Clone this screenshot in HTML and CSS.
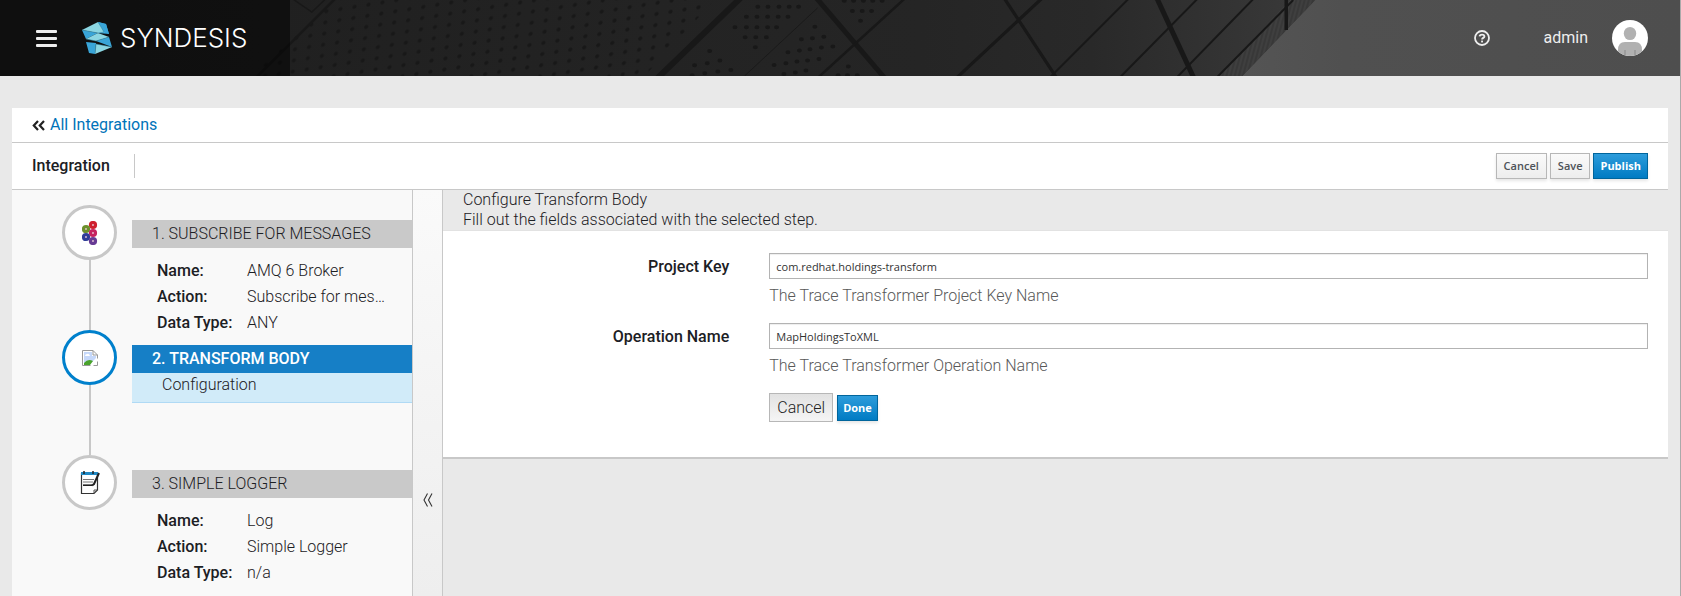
FILE: index.html
```html
<!DOCTYPE html>
<html lang="en">
<head>
<meta charset="utf-8">
<title>Syndesis</title>
<link rel="stylesheet" href="styles.css">
</head>
<body>
<div class="page">
  <header class="masthead">
    <svg class="masthead-art" viewBox="0 0 1681 76" preserveAspectRatio="none" aria-hidden="true">
      <defs>
        <linearGradient id="wall" x1="0" x2="1" y1="0" y2="0">
          <stop offset="0" stop-color="#1e1e1e"/><stop offset=".7" stop-color="#252525"/><stop offset=".83" stop-color="#292929"/><stop offset="1" stop-color="#3a3a3a"/>
        </linearGradient>
        <linearGradient id="sky" x1="0" x2="1" y1="0" y2="0">
          <stop offset="0" stop-color="#565656"/><stop offset=".3" stop-color="#505050"/><stop offset="1" stop-color="#4e4e4e"/>
        </linearGradient>
        <pattern id="dots" width="14" height="11" patternUnits="userSpaceOnUse" patternTransform="translate(6 2) skewY(-9) skewX(-6)">
          <circle cx="5" cy="5" r="2.1" fill="#181818"/>
        </pattern>
        <pattern id="hatch" width="4" height="8" patternUnits="userSpaceOnUse" patternTransform="rotate(15)">
          <path d="M1 0V8" stroke="#343434" stroke-width="1.4"/>
        </pattern>
      </defs>
      <rect x="1200" width="481" height="76" fill="url(#sky)"/>
      <path d="M0 0H1316L1243 76H0Z" fill="url(#wall)"/>
      <path d="M1291 0H1316L1243 76H1219Z" fill="#3f3f3f"/>
      <path d="M1291 0H1316L1243 76H1219Z" fill="url(#hatch)"/>
      <path d="M335 0H715L645 76H250Z" fill="url(#dots)"/>
      <g fill="none" stroke="#181818">
        <path d="M742 -3L657 79" stroke-width="6"/>
        <path d="M816 -3L886 79" stroke-width="5"/>
        <path d="M907 -3L817 79M337 -3L255 79" stroke-width="2.5"/>
        <path d="M290 -3L312 12L328 -3" stroke-width="1.5"/>
        <path d="M818 8L745 76" stroke-width=".8"/>
        <path d="M1044 -3L956 79M1004 -3L1058 79" stroke-width="3.2"/>
        <path d="M1131 -3L1049 79M1200 -3L1119 79M1256 -3L1176 79M1294 0L1216 79" stroke-width="2"/>
        <path d="M1157 -3L1195 79" stroke-width="5"/>
        <path d="M1287 0V30" stroke-width="3.5"/>
      </g>
      <path transform="translate(400) scale(.408 .333)" fill="none" stroke="#181818" stroke-width="12" stroke-linecap="round" d="M878 20h.1M903 20h.1M930 20h.1M955 20h.1M978 20h.1M850 50h.1M876 50h.1M902 50h.1M928 50h.1M952 50h.1M822 82h.1M850 82h.1M876 82h.1M902 82h.1M924 82h.1M847 112h.1M873 112h.1M899 112h.1M872 142h.1M1018 80h.1M985 118h.1M1012 115h.1M1040 110h.1M952 157h.1M980 152h.1M1006 148h.1M1034 143h.1M1062 140h.1M918 195h.1M947 190h.1M974 185h.1M1000 182h.1M1028 177h.1M942 222h.1M970 218h.1M996 212h.1M760 153h.1M723 196h.1M754 190h.1M785 182h.1M717 226h.1M748 220h.1M780 215h.1M812 210h.1M1110 33h.1M1134 33h.1M1157 33h.1M1130 62h.1M1090 2h.1M1113 2h.1M1137 2h.1M1160 2h.1M1183 2h.1M1100 200h.1M1075 226h.1M1098 226h.1M1122 226h.1"/>
    </svg>
    <div class="brand">
      <button class="menu" type="button" aria-label="Toggle navigation"><span></span><span></span><span></span></button>
      <svg class="logo" viewBox="0 0 30 32" aria-hidden="true">
        <path fill="#39a5d8" d="M16 0L24 2L27 12L16 11ZM0 8L16 11L4 17ZM27 15L30 25L14 19ZM4 20L14 21L13 32L7 31Z"/>
        <path fill="#8bd6e2" d="M0 8L16 0L24 10L16 11ZM4 17L16 11L27 15L14 19ZM14 22L30 25L13 32Z"/>
        <path fill="#39a5d8" d="M16 0L24 2L27 12L22 10Z"/>
        <path fill="none" stroke="#2b7f9c" stroke-width=".5" d="M0 8L16 11L22 10L16 0M4 17L14 19L27 15M14 22L30 25M14 22L13 32"/>
      </svg>
      <span class="wordmark">SYNDESIS</span>
    </div>
    <div class="account">
      <button class="help" type="button" aria-label="Help">
        <svg viewBox="0 0 16 16" aria-hidden="true"><circle cx="8" cy="8" r="7" fill="none" stroke="#eee" stroke-width="1.800"/><path d="M5.600 6.300C5.800 4.200 10.400 3.900 10.400 6.400C10.400 7.900 8.100 7.900 8.100 9.400" fill="none" stroke="#eee" stroke-width="1.900"/><rect x="7.100" y="10.600" width="1.900" height="1.800" fill="#eee"/></svg>
      </button>
      <span class="user">admin</span>
      <svg class="avatar" viewBox="0 0 36 36" aria-hidden="true"><defs><clipPath id="face"><circle cx="18" cy="18" r="18"/></clipPath></defs><circle cx="18" cy="18" r="18" fill="#fff"/><g clip-path="url(#face)"><ellipse cx="18" cy="13.500" rx="6.200" ry="6.600" fill="#b1b1b1"/><path d="M6 36V30Q6 22 13 22H23Q30 22 30 30V36Z" fill="#b1b1b1"/><path d="M13 30V36M23 30V36" stroke="#979797" stroke-width="1.500"/></g></svg>
    </div>
  </header>

  <main class="sheet">
    <nav class="crumbs" aria-label="Breadcrumb">
      <svg class="chevrons" viewBox="0 0 13 11" aria-hidden="true"><path d="M6 1L1.800 5.500L6 10M12 1L7.800 5.500L12 10" fill="none" stroke="#222" stroke-width="2.200"/></svg>
      <a href="#">All Integrations</a>
    </nav>
    <div class="toolbar">
      <h1>Integration</h1>
      <div class="actions">
        <button class="btn" type="button">Cancel</button>
        <button class="btn" type="button">Save</button>
        <button class="btn primary" type="button">Publish</button>
      </div>
    </div>

    <div class="workspace">
      <ol class="steps">
        <li class="step">
          <div class="rail"><span class="node">
            <svg width="16" height="24" viewBox="0 0 16 24" aria-hidden="true"><g fill="#e9c9d8" stroke-width="3.200"><circle cx="11" cy="4" r="2.500" stroke="#cf1f2e"/><circle cx="4" cy="8" r="2.500" stroke="#6d902c"/><circle cx="11" cy="12" r="2.500" stroke="#c6225f"/><circle cx="4" cy="16" r="2.500" stroke="#303d98"/><circle cx="11" cy="20" r="2.500" stroke="#673a94"/></g></svg>
          </span></div>
          <div class="detail">
            <h2>1. SUBSCRIBE FOR MESSAGES</h2>
            <dl><dt>Name:</dt><dd>AMQ 6 Broker</dd><dt>Action:</dt><dd>Subscribe for mes…</dd><dt>Data Type:</dt><dd>ANY</dd></dl>
          </div>
        </li>
        <li class="step current">
          <div class="rail"><span class="node">
            <svg width="16" height="16" viewBox="0 0 16 16" aria-hidden="true"><path d="M.500 .500H11L15.500 5V15.500H.500Z" fill="#fff" stroke="#999"/><path d="M2 2H10V6H14V8L8 14H2Z" fill="#c5d8fa"/><path d="M3 6Q3 4 5 4Q7 3 8 6Z" fill="#fff"/><path d="M2 15V13Q6 8 11 11L8 15Z" fill="#4aa32c"/><path d="M11 .500V5H15.500" fill="none" stroke="#999"/><path d="M8 16L16 8V11L11 16Z" fill="#fff"/></svg>
          </span></div>
          <div class="detail">
            <h2>2. TRANSFORM BODY</h2>
            <a class="substep" href="#">Configuration</a>
          </div>
        </li>
        <li class="step">
          <div class="rail"><span class="node">
            <svg width="20" height="24" viewBox="0 0 20 24" aria-hidden="true"><path d="M1.500 2V22.500H14L17.500 19V3" fill="#fff" stroke="#333" stroke-width="1.200"/><path d="M1 1H18V4H1Z" fill="#2089c4"/><path d="M4 0V3M13 0V3" stroke="#222" stroke-width="1.500"/><path d="M3 8.500H14M3 11H13M3 13.500H12" stroke="#777"/><path d="M3 14.500H12" stroke="#222"/><path d="M19 2L14 13L12 14.500" fill="none" stroke="#222" stroke-width="2"/><path d="M14 22V19H17" fill="none" stroke="#555"/></svg>
          </span></div>
          <div class="detail">
            <h2>3. SIMPLE LOGGER</h2>
            <dl><dt>Name:</dt><dd>Log</dd><dt>Action:</dt><dd>Simple Logger</dd><dt>Data Type:</dt><dd>n/a</dd></dl>
          </div>
        </li>
      </ol>
      <button class="collapse" type="button" aria-label="Collapse panel"><svg width="10" height="14" viewBox="0 0 10 14" aria-hidden="true"><path d="M4.500 .500L1 7L4.500 13.500M9 .500L5.500 7L9 13.500" fill="none" stroke="#333" stroke-width="1.100"/></svg></button>
      <section class="editor">
        <div class="intro">
          <div>Configure Transform Body</div>
          <div>Fill out the fields associated with the selected step.</div>
        </div>
        <form class="form">
          <label for="project-key">Project Key</label>
          <div class="field"><input id="project-key" type="text" value="com.redhat.holdings-transform"><p>The Trace Transformer Project Key Name</p></div>
          <label for="operation-name">Operation Name</label>
          <div class="field"><input id="operation-name" type="text" value="MapHoldingsToXML"><p>The Trace Transformer Operation Name</p></div>
          <div class="buttons"><button class="btn large" type="button">Cancel</button><button class="btn primary compact" type="button">Done</button></div>
        </form>
      </section>
    </div>
  </main>
</div>
</body>
</html>
```
FILE: styles.css
```css
* { box-sizing: border-box; }

body {
  margin: 0;
  background: #e9e9e9;
  color: #1c2024;
  font: 300 16px/20px Roboto, "Liberation Sans", sans-serif;
}

.page {
  display: flex;
  flex-direction: column;
  min-height: 100vh;
  border-right: 1px solid #aaa;
}

h1, h2, dl, dd, p, ol { margin: 0; padding: 0; }
button, input { font-family: inherit; }

.masthead {
  position: relative;
  display: flex;
  justify-content: space-between;
  height: 76px;
  background: #202020;
}
.masthead-art { position: absolute; inset: 0; width: 100%; height: 100%; }

.brand {
  position: relative;
  display: flex;
  align-items: center;
  width: 290px;
  padding-left: 36px;
  background: rgba(0, 0, 0, .5);
}
.menu {
  display: flex;
  flex-direction: column;
  gap: 4px;
  width: 21px;
  padding: 0;
  border: 0;
  background: none;
}
.menu span { width: 100%; height: 3px; border-radius: 1px; background: #eee; }
.logo { width: 30px; height: 32px; margin: 0 8px 0 25px; }
.wordmark { color: #fff; font: 300 26px/32px Inter, sans-serif; }

.account { position: relative; display: flex; align-items: center; padding-right: 32px; color: #eee; font-weight: 400; }
.help { width: 16px; height: 16px; padding: 0; border: 0; background: none; }
.help svg { display: block; }
.user { margin: 0 24px 0 54px; }
.avatar { width: 36px; height: 36px; }

.sheet { display: flex; flex: 1; flex-direction: column; margin: 32px 12px 0; }

.crumbs {
  display: flex;
  align-items: center;
  gap: 5px;
  height: 35px;
  padding: 0 20px;
  border-bottom: 1px solid #c8c8c8;
  background: #fff;
}
.chevrons { width: 13px; height: 11px; }
.crumbs a { color: #0073b9; font-weight: 400; text-decoration: none; }

.toolbar {
  display: flex;
  align-items: center;
  justify-content: space-between;
  height: 47px;
  padding: 0 20px;
  border-bottom: 1px solid #c8c8c8;
  background: #fff;
}
.toolbar h1 {
  padding-right: 24px;
  border-right: 1px solid #c8c8c8;
  font-size: 16px;
  font-weight: 500;
  line-height: 24px;
}
.actions { display: flex; gap: 3px; }

.btn {
  height: 26px;
  padding: 0 7px;
  border: 1px solid #b7b7b7;
  background: linear-gradient(#fafafa, #ededed);
  box-shadow: 0 2px 3px rgba(0, 0, 0, .1);
  color: #4d5258;
  font: 600 11px/20px "Open Sans", sans-serif;
}
.btn.primary { padding: 0 6px; border-color: #00659c; background: linear-gradient(#2d9cdb, #007bc3); color: #fff; font-weight: 700; }
.btn.compact { padding: 0 5px; }
.btn.large { height: 29px; padding: 0 7px; background: linear-gradient(#e2e2e2, #f5f5f5); box-shadow: none; color: #222; font: 300 16px/20px Roboto, sans-serif; }

.workspace { display: flex; flex: 1; }

.steps { flex: 0 0 400px; padding-top: 15px; background: #f9f9f9; list-style: none; }
.step { display: flex; height: 125px; }
.rail {
  display: flex;
  flex: 0 0 55px;
  justify-content: center;
  margin: 0 15px 0 50px;
  background: linear-gradient(#c8c8c8, #c8c8c8) center / 2px 100% no-repeat;
}
.step:last-child .rail { background: none; }
.node {
  display: flex;
  align-items: center;
  justify-content: center;
  width: 55px;
  height: 55px;
  border: 3px solid #c8c8c8;
  border-radius: 50%;
  background: #fff;
}
.current .node { border-color: #0080cc; }
.detail { flex: 1; min-width: 0; padding-top: 15px; }
.detail h2 { padding: 0 20px; background: #c9c9c9; font-size: 16px; font-weight: 300; line-height: 28px; }
.current h2 { background: #167fc6; color: #fff; font-weight: 500; }
.substep {
  display: block;
  height: 30px;
  padding: 2px 30px;
  border-bottom: 1px solid #b0daf5;
  background: #d1ebf9;
  color: inherit;
  text-decoration: none;
}
.detail dl { display: grid; grid-template-columns: 90px 1fr; padding: 10px 20px 0 25px; line-height: 26px; }
.detail dt { font-weight: 500; }
.detail dd { white-space: nowrap; }

.collapse {
  display: flex;
  flex: 0 0 31px;
  justify-content: center;
  align-items: flex-start;
  padding: 303px 0 0;
  border: 1px solid #c8c8c8;
  border-width: 0 1px;
  background: linear-gradient(#fafafa, #eee);
}

.editor { flex: 1; min-width: 0; }
.intro { height: 41px; padding: 0 20px; border-bottom: 1px solid #e2e2e2; }
.form {
  display: grid;
  grid-template-columns: 1fr 3fr;
  row-gap: 17px;
  padding: 22px 0 35px;
  border-bottom: 2px solid #c8c8c8;
  background: #fff;
}
.form label { padding: 4px 20px; font-weight: 500; text-align: right; }
.field { padding: 0 20px; }
.field input {
  display: block;
  width: 100%;
  height: 26px;
  padding: 0 6px;
  border: 1px solid #b3b3b3;
  background: #fff;
  box-shadow: inset 0 1px 1px rgba(0, 0, 0, .07);
  color: #333;
  font: 400 11px/20px "Open Sans", sans-serif;
}
.field p { padding-top: 7px; color: #585858; }
.buttons { display: flex; grid-column: 2; align-items: center; gap: 4px; padding: 0 20px; }
```
